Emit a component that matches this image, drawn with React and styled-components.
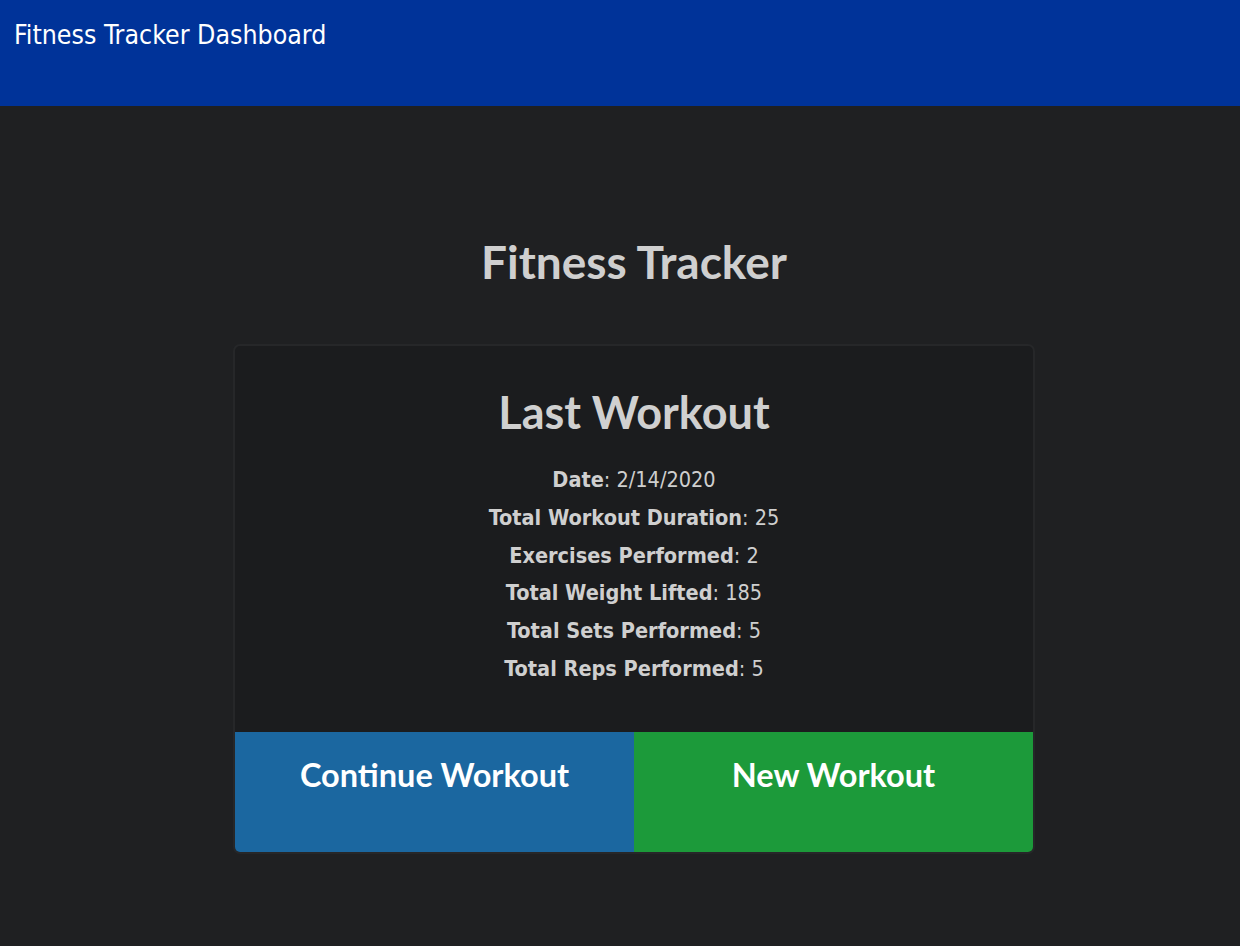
import React from "react";
import styled, { createGlobalStyle } from "styled-components";

const GlobalStyle = createGlobalStyle`
  html, body {
    margin: 0;
    padding: 0;
    background: #1f2022;
    min-height: 100%;
  }
`;

const Page = styled.div`
  min-height: 946px;
  background: #1f2022;
`;

const Header = styled.header`
  height: 106px;
  box-sizing: border-box;
  background: #003399;
  padding: 19px 14px;
  color: #ffffff;
  font-family: "DejaVu Sans Condensed", "DejaVu Sans", sans-serif;
  font-size: 26.5px;
  line-height: 32px;
`;

const Main = styled.main`
  padding: 130px 0 0 28px;
  display: flex;
  flex-direction: column;
  align-items: center;
  font-family: Lato, sans-serif;
`;

const Title = styled.h1`
  margin: 0 0 56px;
  font-size: 46px;
  line-height: 52px;
  font-weight: 700;
  color: #cfcfcf;
`;

const Card = styled.section`
  width: 802px;
  box-sizing: border-box;
  background: #1b1c1e;
  border: 2px solid #262729;
  border-radius: 7px;
  overflow: hidden;
  display: flex;
  flex-direction: column;
`;

const CardBody = styled.div`
  padding: 38px 20px 44px;
  text-align: center;
`;

const CardTitle = styled.h2`
  margin: 0 0 21px;
  font-size: 45px;
  line-height: 56px;
  font-weight: 700;
  color: #d0d0d0;
`;

const StatList = styled.ul`
  list-style: none;
  margin: 0;
  padding: 0;
  font-family: "DejaVu Sans Condensed", "DejaVu Sans", sans-serif;
  font-size: 21.5px;
  line-height: 37.8px;
  color: #cfcfcf;

  strong {
    font-weight: 700;
  }
`;

const Actions = styled.div`
  display: grid;
  grid-template-columns: 1fr 1fr;
  height: 120px;
`;

const ActionButton = styled.button`
  border: none;
  margin: 0;
  padding: 23px 10px 0;
  background: ${(p) => p.$bg};
  color: #ffffff;
  font-family: Lato, sans-serif;
  font-size: 32.5px;
  font-weight: 700;
  line-height: 40px;
  text-align: center;
  display: flex;
  justify-content: center;
  align-items: flex-start;
  cursor: pointer;
`;

const stats = [
  ["Date", "2/14/2020"],
  ["Total Workout Duration", "25"],
  ["Exercises Performed", "2"],
  ["Total Weight Lifted", "185"],
  ["Total Sets Performed", "5"],
  ["Total Reps Performed", "5"],
];

export default function App() {
  return (
    <Page>
      <GlobalStyle />
      <Header>Fitness Tracker Dashboard</Header>
      <Main>
        <Title>Fitness Tracker</Title>
        <Card>
          <CardBody>
            <CardTitle>Last Workout</CardTitle>
            <StatList>
              {stats.map(([label, value]) => (
                <li key={label}>
                  <strong>{label}</strong>: {value}
                </li>
              ))}
            </StatList>
          </CardBody>
          <Actions>
            <ActionButton $bg="#1b67a0">Continue Workout</ActionButton>
            <ActionButton $bg="#1c9a3a">New Workout</ActionButton>
          </Actions>
        </Card>
      </Main>
    </Page>
  );
}
